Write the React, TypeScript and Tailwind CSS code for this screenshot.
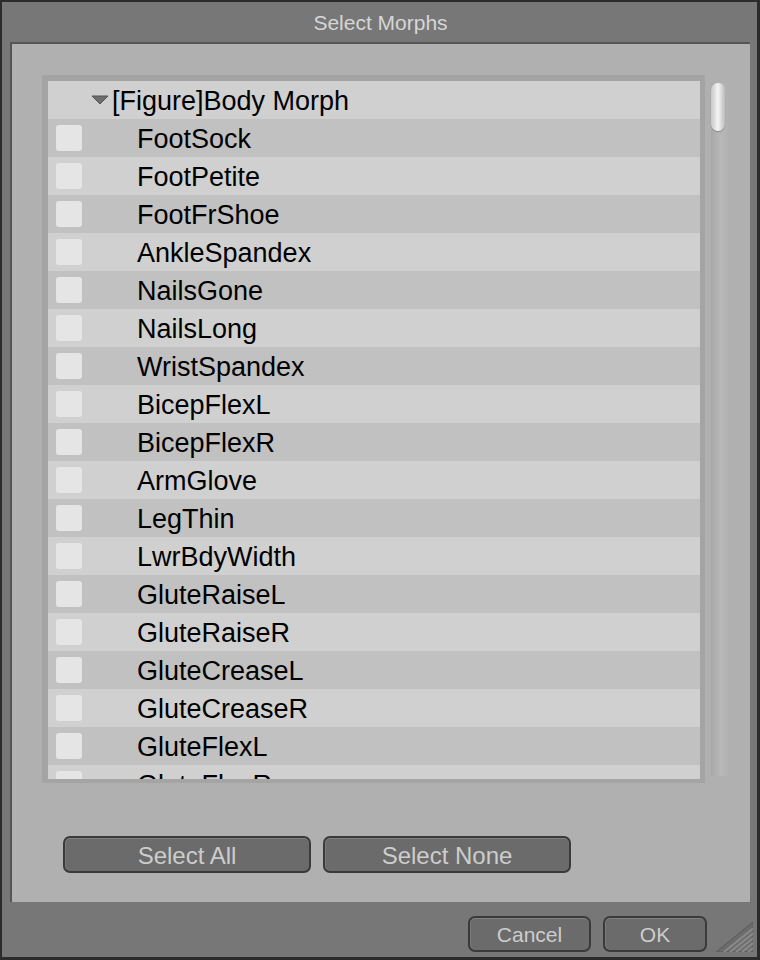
import React from 'react';

const morphs = [
  'FootSock',
  'FootPetite',
  'FootFrShoe',
  'AnkleSpandex',
  'NailsGone',
  'NailsLong',
  'WristSpandex',
  'BicepFlexL',
  'BicepFlexR',
  'ArmGlove',
  'LegThin',
  'LwrBdyWidth',
  'GluteRaiseL',
  'GluteRaiseR',
  'GluteCreaseL',
  'GluteCreaseR',
  'GluteFlexL',
  'GluteFlexR',
];

const font = { fontFamily: '"Liberation Sans", Arial, sans-serif' };

const DarkButton = ({ label, className }: { label: string; className: string }) => (
  <button
    className={`flex items-center justify-center rounded-[7px] border-2 border-[#3a3a3a] bg-[#6b6b6b] pt-[2px] text-[#cdcdcd] shadow-[inset_0_1px_0_#808080,inset_1px_0_0_#7a7a7a] ${className}`}
  >
    {label}
  </button>
);

const Grip = () => (
  <svg width="37" height="30" viewBox="0 0 37 30">
    <polygon points="0,30 37,0 37,30" fill="#6c6c6c" stroke="#5a5a5a" strokeWidth="1" />
    {[8, 14, 20, 26, 32].map((o) => (
      <line key={o} x1={o} y1="30" x2="37" y2={30 - (37 - o) * 0.81} stroke="#8a8a8a" strokeWidth="2" />
    ))}
  </svg>
);

const MorphRow = ({ name, index }: { name: string; index: number }) => (
  <div
    className={`flex h-[38px] shrink-0 items-center ${index % 2 === 0 ? 'bg-[#c1c1c1]' : 'bg-[#d0d0d0]'}`}
  >
    <div className="ml-[8px] h-[26px] w-[26px] rounded-[3px] bg-[#e5e5e5]" />
    <span className="ml-[55px] pt-[2px] text-[27px] leading-none text-black">{name}</span>
  </div>
);

export default function App() {
  return (
    <div
      className="flex h-[960px] w-[760px] flex-col border-2 border-b-[3px] border-r-[3px] border-[#2b2b2b] bg-[#777777]"
      style={font}
    >
      <div className="flex h-[40px] shrink-0 items-center justify-center pl-[2px] pt-[1px] text-[21px] text-[#d6d6d6]">
        Select Morphs
      </div>

      <div className="ml-[8px] flex h-[860px] w-[740px] shrink-0 flex-col border-l-2 border-t-2 border-[#555555] bg-[#b0b0b0]">
        <div className="flex pl-[30px] pt-[31px]">
          <div className="h-[708px] w-[663px] border-b-[4px] border-l-[6px] border-r-[5px] border-t-[6px] border-[#a4a4a4] shadow-[inset_0_0_0_1px_#9c9c9c]">
            <div className="flex h-full flex-col overflow-hidden">
              <div className="flex h-[38px] shrink-0 items-center bg-[#d0d0d0]">
                <svg width="18" height="10" viewBox="0 0 18 10" className="ml-[43px]">
                  <polygon points="1,1 17,1 9,9" fill="#6e6e6e" stroke="#555" strokeWidth="1" />
                </svg>
                <span className="ml-[3px] pt-[2px] text-[27px] leading-none text-black">[Figure]Body Morph</span>
              </div>
              {morphs.map((m, i) => (
                <MorphRow key={m} name={m} index={i} />
              ))}
            </div>
          </div>

          <div className="ml-[6px] mt-[8px] flex h-[693px] w-[20px] flex-col bg-gradient-to-r from-[#a8a8a8] via-[#b8b8b8] to-[#afafaf]">
            <div className="h-[48px] w-[14px] rounded-full bg-gradient-to-r from-[#c8c8c8] via-[#f4f4f4] to-[#bcbcbc] shadow-[0_1px_1px_#888]" />
          </div>
        </div>

        <div className="mt-[53px] flex gap-[12px] pl-[51px]">
          <DarkButton label="Select All" className="h-[37px] w-[248px] text-[24px]" />
          <DarkButton label="Select None" className="h-[37px] w-[248px] text-[24px]" />
        </div>
      </div>

      <div className="flex flex-1 items-start justify-end pt-[14px]">
        <DarkButton label="Cancel" className="h-[36px] w-[123px] text-[21px]" />
        <DarkButton label="OK" className="ml-[12px] h-[36px] w-[104px] text-[21px]" />
        <div className="ml-[9px] mr-[4px] mt-[6px]">
          <Grip />
        </div>
      </div>
    </div>
  );
}
